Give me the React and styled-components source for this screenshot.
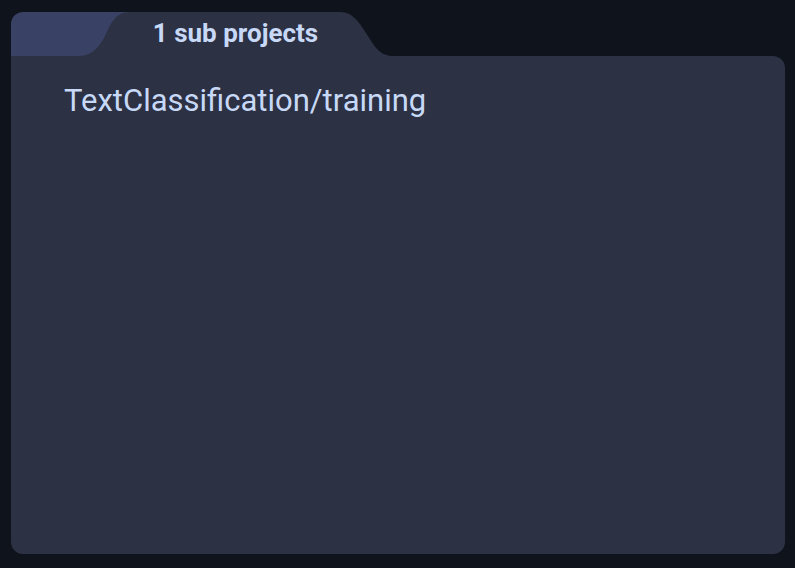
import React from 'react';
import styled, { createGlobalStyle } from 'styled-components';

const GlobalStyle = createGlobalStyle`
  html, body {
    margin: 0;
    padding: 0;
    background: #0f131b;
  }
  body {
    font-family: Roboto, "Noto Sans", sans-serif;
  }
`;

const Page = styled.div`
  width: 795px;
  height: 568px;
  box-sizing: border-box;
  padding: 12px 10px 14px 11px;
  display: flex;
  flex-direction: column;
`;

const TabBar = styled.div`
  display: flex;
  height: 44px;
  flex-shrink: 0;
`;

const InactiveTab = styled.div`
  width: 120px;
  background: #394265;
  border-top-left-radius: 12px;
  flex-shrink: 0;
`;

const ActiveTab = styled.div`
  position: relative;
  width: 315px;
  margin-left: -53px;
  display: flex;
  align-items: flex-start;
  justify-content: center;
  padding-top: 6px;
  box-sizing: border-box;
`;

const TabShape = styled.svg`
  position: absolute;
  inset: 0;
  width: 100%;
  height: 100%;
`;

const TabLabel = styled.span`
  position: relative;
  font-size: 26px;
  line-height: 30px;
  font-weight: 700;
  color: #c8d9f7;
`;

const Panel = styled.div`
  flex: 1;
  background: #2c3144;
  border-radius: 0 12px 12px 12px;
  padding: 27px 53px;
`;

const ProjectLink = styled.div`
  font-size: 31px;
  line-height: 36px;
  color: #c8d9f7;
`;

export default function App() {
  return (
    <>
      <GlobalStyle />
      <Page>
        <TabBar>
          <InactiveTab />
          <ActiveTab>
            <TabShape viewBox="0 0 315 44" preserveAspectRatio="none">
              <path
                d="M0 44 C14 44 20 36 26 26 C32 14 36 0 52 0 L262 0 C276 0 282 12 290 24 C296 34 302 44 315 44 Z"
                fill="#2c3144"
              />
            </TabShape>
            <TabLabel>1 sub projects</TabLabel>
          </ActiveTab>
        </TabBar>
        <Panel>
          <ProjectLink>TextClassification/training</ProjectLink>
        </Panel>
      </Page>
    </>
  );
}
